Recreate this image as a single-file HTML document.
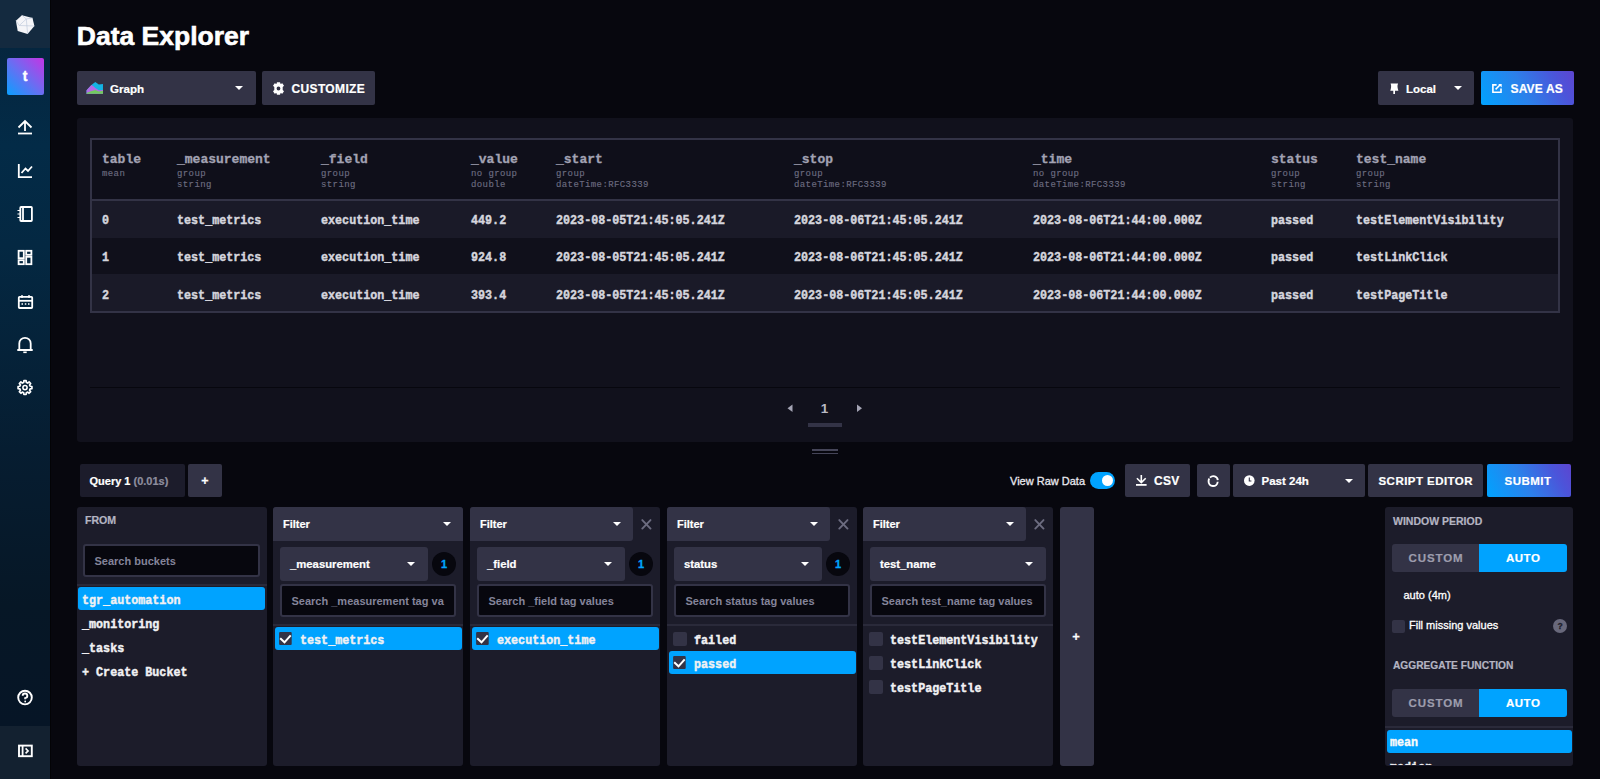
<!DOCTYPE html>
<html><head><meta charset="utf-8">
<style>
*{box-sizing:border-box;margin:0;padding:0}
html,body{width:1600px;height:779px;overflow:hidden;background:#07070e;font-family:"Liberation Sans",sans-serif;color:#fff}
.abs{position:absolute}
.mono{font-family:"Liberation Mono",monospace}
#side{left:0;top:0;width:50px;height:779px;background:linear-gradient(180deg,#05263f 48px,#032b47 145px,#042842 245px,#061d31 450px,#061726 605px,#061526 725px)}
#logo{left:0;top:0;width:50px;height:48.3px;background:#142a3f}
#avatar{left:6.5px;top:58px;width:37px;height:37px;border-radius:2px;background:linear-gradient(225deg,#c534e4 0%,#6b6df2 50%,#0aa0ff 100%);font-weight:bold;font-size:14px;text-align:center;line-height:36px;-webkit-text-stroke:0.4px #fff}
#sidebot{left:0;top:725.5px;width:50px;height:54px;background:#132130}
h1{position:absolute;left:76.8px;top:21px;font-size:26.5px;font-weight:bold;color:#fff;letter-spacing:0px;-webkit-text-stroke:0.6px #fff}
.btn{position:absolute;background:#333346;border-radius:2px;color:#fff;font-weight:bold;font-size:12px}
.panel{position:absolute;background:#11111c;border-radius:3px}
.th{position:absolute;top:151.5px;font-family:"Liberation Mono",monospace;font-weight:bold;font-size:13px;color:#a2a2b3;line-height:16px;-webkit-text-stroke:0.3px #a2a2b3}
.ts{position:absolute;top:168.5px;font-family:"Liberation Mono",monospace;font-size:9px;letter-spacing:0.4px;color:#6c6c80;line-height:11.5px;-webkit-text-stroke:0.15px #6c6c80}
.td{position:absolute;font-family:"Liberation Mono",monospace;font-weight:bold;font-size:11.72px;color:#d5d5dd;line-height:20px;white-space:nowrap;transform:scaleY(1.12);transform-origin:0 15px;-webkit-text-stroke:0.4px #d5d5dd}
.bt{position:absolute;font-weight:bold;color:#fff;line-height:16px;white-space:nowrap;-webkit-text-stroke:0.2px currentColor}
.caret{position:absolute;width:0;height:0;border-left:4.2px solid transparent;border-right:4.2px solid transparent;border-top:4.8px solid #fff}
.card{position:absolute;background:#1c1c2a;border-radius:3px}
.lbl{position:absolute;font-weight:bold;font-size:10.6px;color:#b4b4c2;line-height:14px;white-space:nowrap;-webkit-text-stroke:0.2px #b4b4c2}
.inp{position:absolute;background:#07070e;border:2px solid #333346;border-radius:3px;overflow:hidden;white-space:nowrap}
.inp span{position:absolute;left:9.5px;top:8px;font-weight:bold;font-size:11px;color:#84849a;line-height:14px}
.sel{position:absolute;background:#00a3ff;border-radius:3px}
.li{position:absolute;font-family:"Liberation Mono",monospace;font-weight:bold;font-size:11.72px;color:#f1f1f3;line-height:18px;white-space:nowrap;transform:scaleY(1.12);transform-origin:0 13px;-webkit-text-stroke:0.4px #f1f1f3}
</style></head><body>
<div id="side" class="abs"></div>
<div class="abs" style="left:50px;top:0;width:1px;height:779px;background:#030306"></div>
<div id="logo" class="abs"></div>
<svg class="abs" style="left:0;top:0" width="50" height="48" viewBox="0 0 50 48">
<polygon points="21.9,15.2 32.5,17.9 34.4,26 27.6,33.9 17.7,31 15.9,20.7" fill="#f5f5f8"/>
<polyline points="15.9,20.7 19.3,25.5 26.3,19 21.9,15.2" fill="none" stroke="#b8c4d8" stroke-width="0.6"/>
<polyline points="19.3,25.5 34.4,26" fill="none" stroke="#b8c4d8" stroke-width="0.6"/>
<polyline points="26.3,19 27.6,33.9" fill="none" stroke="#b8c4d8" stroke-width="0.6"/>
<polyline points="26.3,19 32.5,17.9" fill="none" stroke="#b8c4d8" stroke-width="0.6"/>
</svg>
<div id="avatar" class="abs">t</div>
<div id="sidebot" class="abs"></div>
<svg class="abs" style="left:0;top:100px" width="50" height="310" viewBox="0 100 50 310" fill="none" stroke="#fff" stroke-width="1.8">
<!-- upload -->
<path d="M18.5 127.5 L25 121 L31.5 127.5 M25 121.5 V131"/>
<path d="M18 133.5 H32" stroke-width="1.8"/>
<!-- chart -->
<path d="M18.8 164 V177.2 H32"/>
<path d="M21.5 173 L25.5 168.5 L28 171 L32 166.5"/>
<!-- notebook -->
<rect x="20.3" y="207" width="11.6" height="14" rx="0.8"/>
<path d="M23 207 V221"/>
<path d="M17.5 210.5 H20 M17.5 214 H20 M17.5 217.5 H20" stroke-width="1.1"/>
<!-- dashboards -->
<rect x="18.6" y="250.8" width="5.2" height="7.4"/>
<rect x="18.6" y="260.2" width="5.2" height="4"/>
<rect x="26.2" y="250.8" width="5.2" height="4"/>
<rect x="26.2" y="256.8" width="5.2" height="7.4"/>
<!-- calendar -->
<rect x="18.8" y="296.8" width="13.4" height="11.2" rx="0.8"/>
<path d="M18.8 300.8 H32.2" />
<path d="M22 295 V298 M29 295 V298" stroke-width="1.4"/>
<path d="M21.5 304 H23 M24.8 304 H26.3 M28 304 H29.5" stroke-width="1.5"/>
<!-- bell -->
<path d="M17.3 350 H32.7 M19.3 350 V343.5 A5.7 5.7 0 0 1 30.7 343.5 V350" stroke-width="1.8" stroke-linejoin="round"/>
<path d="M23.3 352.3 H26.7" stroke-width="1.6"/>
<!-- gear -->
<path stroke-width="1.7" stroke-linejoin="round" d="M23.90 380.69 L26.10 380.69 L26.32 382.47 L27.70 383.04 L29.11 381.94 L30.66 383.49 L29.56 384.90 L30.13 386.28 L31.91 386.50 L31.91 388.70 L30.13 388.92 L29.56 390.30 L30.66 391.71 L29.11 393.26 L27.70 392.16 L26.32 392.73 L26.10 394.51 L23.90 394.51 L23.68 392.73 L22.30 392.16 L20.89 393.26 L19.34 391.71 L20.44 390.30 L19.87 388.92 L18.09 388.70 L18.09 386.50 L19.87 386.28 L20.44 384.90 L19.34 383.49 L20.89 381.94 L22.30 383.04 L23.68 382.47 Z"/>
<circle cx="25" cy="387.6" r="2.1" stroke-width="1.6"/>
</svg>
<svg class="abs" style="left:0;top:680px" width="50" height="99" viewBox="0 680 50 99" fill="none" stroke="#fff" stroke-width="1.9">
<circle cx="25" cy="697.6" r="6.8"/>
<path d="M22.7 695.8 A2.3 2.3 0 1 1 25.2 698.1 V699.2" stroke-width="1.9"/>
<circle cx="25.2" cy="701.5" r="0.9" fill="#fff" stroke="none"/>
<rect x="19" y="745.6" width="12.8" height="10.6"/>
<path d="M22.6 745.6 V756.2" stroke-width="1.8"/>
<path d="M25.6 748.4 L28.1 750.9 L25.6 753.4" stroke-width="1.6"/>
</svg>
<h1>Data Explorer</h1>
<div class="btn" style="left:77px;top:71px;width:179px;height:34px"></div>
<svg class="abs" style="left:86px;top:81px" width="18" height="14" viewBox="0 0 18 14">
<path d="M0.56 9.3 L5.37 4.06 L9.31 1 L12.81 3.4 L16.97 2.97 V12.8 H0.56 Z" fill="#14b4e4"/>
<path d="M0.56 9.3 L5.37 4.06 L7.1 4.9 L9.3 7.1 L12.8 9.3 L17 9.1 V12.8 H0.56 Z" fill="#b46ae6"/>
<path d="M0.56 11.9 L5 10.3 L9.3 8.9 L12.8 10.6 L17 9.75 V12.8 H0.56 Z" fill="#72cc5e"/>
</svg>
<div class="bt" style="left:110px;top:81px;font-size:11.6px">Graph</div>
<div class="caret" style="left:235px;top:85.5px"></div>
<div class="btn" style="left:262px;top:71px;width:113px;height:34px"></div>
<svg class="abs" style="left:272px;top:82px" width="13" height="13" viewBox="0 0 13 13">
<path fill="#fff" fill-rule="evenodd" d="M5 0.3 H8 L8.6 2 L10.3 1.2 L12 3.8 L10.7 5 V8 L12 9.2 L10.3 11.8 L8.6 11 L8 12.7 H5 L4.4 11 L2.7 11.8 L1 9.2 L2.3 8 V5 L1 3.8 L2.7 1.2 L4.4 2 Z M6.5 4.6 A1.9 1.9 0 1 0 6.5 8.4 A1.9 1.9 0 1 0 6.5 4.6 Z"/>
</svg>
<div class="bt" style="left:291.5px;top:81px;font-size:12px;letter-spacing:0.35px">CUSTOMIZE</div>
<div class="btn" style="left:1378px;top:71px;width:96px;height:34px"></div>
<svg class="abs" style="left:1389px;top:83px" width="10" height="12" viewBox="0 0 10 12">
<path fill="#fff" d="M1.6 0.5 H9.1 Q8.3 2.2 8.5 4 Q8.8 6 9.4 7.7 H1.3 Q1.9 6 2.1 4 Q2.3 2.2 1.6 0.5 Z M4.3 7.5 H6 V11.1 H4.3 Z"/>
</svg>
<div class="bt" style="left:1406px;top:81px;font-size:11.5px">Local</div>
<div class="caret" style="left:1453.5px;top:86px"></div>
<div class="btn" style="left:1481px;top:71px;width:93px;height:34px;background:linear-gradient(62deg,#00a3ff 0%,#2c80ea 45%,#4b55da 80%,#5d45d0 100%)"></div>
<svg class="abs" style="left:1491px;top:83px" width="12" height="12" viewBox="0 0 12 12" fill="none" stroke="#fff" stroke-width="1.6"><path d="M5.6 1.9 H1.9 V9.2 H10 V5.6"/><path d="M4.6 6.4 L9.2 1.8" stroke-width="1.5"/><path d="M7.2 1.1 H10.7 V4.6 Z" fill="#fff" stroke="none"/></svg>
<div class="bt" style="left:1510.5px;top:81px;font-size:12px;letter-spacing:0.15px">SAVE AS</div>
<div class="panel" style="left:77px;top:118px;width:1496px;height:324px"></div>
<div class="abs" style="left:90px;top:138px;width:1470px;height:175px;border:2px solid #333346;background:#0f0f1a"></div>
<div class="abs" style="left:92px;top:199px;width:1466px;height:2px;background:#333346"></div>
<div class="abs" style="left:92px;top:201px;width:1466px;height:37px;background:#1a1a28"></div>
<div class="abs" style="left:92px;top:238px;width:1466px;height:36px;background:#10101b"></div>
<div class="abs" style="left:92px;top:274px;width:1466px;height:37px;background:#1a1a28"></div>
<div class="th" style="left:102px">table</div>
<div class="ts" style="left:102px">mean</div>
<div class="th" style="left:177px">_measurement</div>
<div class="ts" style="left:177px">group<br>string</div>
<div class="th" style="left:321px">_field</div>
<div class="ts" style="left:321px">group<br>string</div>
<div class="th" style="left:471px">_value</div>
<div class="ts" style="left:471px">no group<br>double</div>
<div class="th" style="left:556px">_start</div>
<div class="ts" style="left:556px">group<br>dateTime:RFC3339</div>
<div class="th" style="left:794px">_stop</div>
<div class="ts" style="left:794px">group<br>dateTime:RFC3339</div>
<div class="th" style="left:1033px">_time</div>
<div class="ts" style="left:1033px">no group<br>dateTime:RFC3339</div>
<div class="th" style="left:1271px">status</div>
<div class="ts" style="left:1271px">group<br>string</div>
<div class="th" style="left:1356px">test_name</div>
<div class="ts" style="left:1356px">group<br>string</div>
<div class="td" style="left:102px;top:211px">0</div>
<div class="td" style="left:177px;top:211px">test_metrics</div>
<div class="td" style="left:321px;top:211px">execution_time</div>
<div class="td" style="left:471px;top:211px">449.2</div>
<div class="td" style="left:556px;top:211px">2023-08-05T21:45:05.241Z</div>
<div class="td" style="left:794px;top:211px">2023-08-06T21:45:05.241Z</div>
<div class="td" style="left:1033px;top:211px">2023-08-06T21:44:00.000Z</div>
<div class="td" style="left:1271px;top:211px">passed</div>
<div class="td" style="left:1356px;top:211px">testElementVisibility</div>
<div class="td" style="left:102px;top:248px">1</div>
<div class="td" style="left:177px;top:248px">test_metrics</div>
<div class="td" style="left:321px;top:248px">execution_time</div>
<div class="td" style="left:471px;top:248px">924.8</div>
<div class="td" style="left:556px;top:248px">2023-08-05T21:45:05.241Z</div>
<div class="td" style="left:794px;top:248px">2023-08-06T21:45:05.241Z</div>
<div class="td" style="left:1033px;top:248px">2023-08-06T21:44:00.000Z</div>
<div class="td" style="left:1271px;top:248px">passed</div>
<div class="td" style="left:1356px;top:248px">testLinkClick</div>
<div class="td" style="left:102px;top:286px">2</div>
<div class="td" style="left:177px;top:286px">test_metrics</div>
<div class="td" style="left:321px;top:286px">execution_time</div>
<div class="td" style="left:471px;top:286px">393.4</div>
<div class="td" style="left:556px;top:286px">2023-08-05T21:45:05.241Z</div>
<div class="td" style="left:794px;top:286px">2023-08-06T21:45:05.241Z</div>
<div class="td" style="left:1033px;top:286px">2023-08-06T21:44:00.000Z</div>
<div class="td" style="left:1271px;top:286px">passed</div>
<div class="td" style="left:1356px;top:286px">testPageTitle</div>
<div class="abs" style="left:90px;top:387px;width:1470px;height:1px;background:#07070e"></div>
<svg class="abs" style="left:785px;top:400px" width="80" height="20"><polygon points="7.5,4.5 7.5,12 2.5,8.25" fill="#a4a4b4"/><polygon points="72,4.5 72,12 77,8.25" fill="#a4a4b4"/></svg>
<div class="abs" style="left:814.5px;top:400.5px;width:20px;text-align:center;font-size:13.5px;font-weight:bold;color:#b9b9c5">1</div>
<div class="abs" style="left:808px;top:423px;width:34px;height:4px;background:#333346"></div>
<div class="abs" style="left:812px;top:449px;width:26px;height:1.5px;background:#454558"></div>
<div class="abs" style="left:812px;top:452.5px;width:26px;height:1.5px;background:#454558"></div>
<div class="abs" style="left:80px;top:464px;width:105px;height:33px;background:#1c1c2b;border-radius:2px"></div>
<div class="bt" style="left:89.5px;top:473px;font-size:11px">Query 1 <span style="color:#8e8e9e">(0.01s)</span></div>
<div class="btn" style="left:188px;top:464px;width:34px;height:33px"></div>
<div class="bt" style="left:198px;top:473px;font-size:12.5px;width:14px;text-align:center">+</div>
<div class="abs" style="left:1010px;top:473px;font-size:11px;color:#e8e8ee;line-height:16px;-webkit-text-stroke:0.3px #e8e8ee">View Raw Data</div>
<div class="abs" style="left:1090px;top:472px;width:25px;height:16.5px;border-radius:9px;background:#00a3ff"></div>
<div class="abs" style="left:1102px;top:475px;width:11px;height:11px;border-radius:50%;background:#fff"></div>
<div class="btn" style="left:1125px;top:464px;width:65px;height:33px"></div>
<svg class="abs" style="left:1135px;top:474px" width="13" height="13" viewBox="0 0 13 13" fill="none" stroke="#fff" stroke-width="1.6"><path d="M6.3 1 V8.2 M1.9 4.3 L6.3 8.6 L10.7 4.3"/><path d="M1 10.9 H11.6" stroke-width="1.8"/></svg>
<div class="bt" style="left:1154px;top:473px;font-size:12px;letter-spacing:0.3px">CSV</div>
<div class="btn" style="left:1196.5px;top:464px;width:33px;height:33px"></div>
<svg class="abs" style="left:1206px;top:474px" width="14" height="14" viewBox="0 0 14 14" fill="none" stroke="#fff" stroke-width="1.9"><path d="M4 3.6 A4.5 4.5 0 0 1 11.8 6.2"/><path d="M11.7 7.8 A4.5 4.5 0 0 1 2.6 7.2 A4.5 4.5 0 0 1 3.3 4.4"/></svg>
<div class="btn" style="left:1233px;top:464px;width:132px;height:33px"></div>
<svg class="abs" style="left:1243px;top:474px" width="13" height="13" viewBox="0 0 13 13"><circle cx="6.3" cy="6.6" r="5.3" fill="#fff"/><path d="M6.3 3.6 V7 H8.4" fill="none" stroke="#333346" stroke-width="1.1"/></svg>
<div class="bt" style="left:1261.5px;top:473px;font-size:11.5px">Past 24h</div>
<div class="caret" style="left:1344.5px;top:478.5px"></div>
<div class="btn" style="left:1368px;top:464px;width:115px;height:33px"></div>
<div class="bt" style="left:1378.5px;top:473px;font-size:11.5px;letter-spacing:0.45px">SCRIPT EDITOR</div>
<div class="btn" style="left:1486.5px;top:464px;width:84px;height:33px;background:linear-gradient(62deg,#00a3ff 0%,#2c80ea 45%,#4b55da 80%,#5d45d0 100%)"></div>
<div class="bt" style="left:1504.5px;top:473px;font-size:11.5px;letter-spacing:0.5px">SUBMIT</div>
<div class="card" style="left:77px;top:507px;width:190px;height:259px"></div>
<div class="lbl" style="left:85px;top:513px">FROM</div>
<div class="inp" style="left:83px;top:544px;width:177px;height:33px"><span>Search buckets</span></div>
<div class="abs" style="left:77px;top:584px;width:190px;height:2px;background:#2a2a3a"></div>
<div class="sel" style="left:78px;top:587px;width:187px;height:23px"></div>
<div class="li" style="left:82px;top:592px">tgr_automation</div>
<div class="li" style="left:82px;top:616px">_monitoring</div>
<div class="li" style="left:82px;top:640px">_tasks</div>
<div class="li" style="left:82px;top:664px">+ Create Bucket</div>
<div class="card" style="left:273px;top:507px;width:190px;height:259px"></div>
<div class="abs" style="left:273px;top:507px;width:190px;height:34px;background:#333346;border-radius:3px 3px 0 0"></div>
<div class="bt" style="left:283px;top:516px;font-size:11px">Filter</div>
<div class="caret" style="left:443px;top:522px"></div>
<div class="abs" style="left:280px;top:547px;width:148px;height:34px;background:#333346;border-radius:3px"></div>
<div class="bt" style="left:290px;top:556px;font-size:11.3px">_measurement</div>
<div class="caret" style="left:407px;top:561.5px"></div>
<div class="abs" style="left:432px;top:552px;width:24px;height:24px;border-radius:50%;background:#07070e;color:#00a3ff;font-weight:bold;font-size:11px;text-align:center;line-height:24px;-webkit-text-stroke:0.3px #00a3ff">1</div>
<div class="inp" style="left:280px;top:584px;width:176px;height:33px"><span>Search _measurement tag va</span></div>
<div class="abs" style="left:273px;top:624px;width:190px;height:2px;background:#2a2a3a"></div>
<div class="sel" style="left:274.5px;top:627px;width:187px;height:23px"></div>
<svg class="abs" style="left:278.5px;top:632px" width="14" height="14" viewBox="0 0 14 14"><rect x="0.1" y="0.1" width="12.6" height="12.8" rx="1" fill="#333346"/><path d="M1.2 6.3 L5.5 10.3 L11.7 3.3" fill="none" stroke="#fff" stroke-width="2"/></svg>
<div class="li" style="left:300px;top:632px">test_metrics</div>
<div class="card" style="left:470px;top:507px;width:190px;height:259px"></div>
<div class="abs" style="left:470px;top:507px;width:163px;height:34px;background:#333346;border-radius:3px 3px 3px 0"></div>
<div class="bt" style="left:480px;top:516px;font-size:11px">Filter</div>
<div class="caret" style="left:613px;top:522px"></div>
<svg class="abs" style="left:641px;top:519px" width="11" height="11" viewBox="0 0 11 11" stroke="#6c6c80" stroke-width="1.9" stroke-linecap="round"><path d="M1.3 1.1 L9.5 9.6 M9.5 1.1 L1.3 9.6"/></svg>
<div class="abs" style="left:477px;top:547px;width:148px;height:34px;background:#333346;border-radius:3px"></div>
<div class="bt" style="left:487px;top:556px;font-size:11.3px">_field</div>
<div class="caret" style="left:604px;top:561.5px"></div>
<div class="abs" style="left:629px;top:552px;width:24px;height:24px;border-radius:50%;background:#07070e;color:#00a3ff;font-weight:bold;font-size:11px;text-align:center;line-height:24px;-webkit-text-stroke:0.3px #00a3ff">1</div>
<div class="inp" style="left:477px;top:584px;width:176px;height:33px"><span>Search _field tag values</span></div>
<div class="abs" style="left:470px;top:624px;width:190px;height:2px;background:#2a2a3a"></div>
<div class="sel" style="left:471.5px;top:627px;width:187px;height:23px"></div>
<svg class="abs" style="left:475.5px;top:632px" width="14" height="14" viewBox="0 0 14 14"><rect x="0.1" y="0.1" width="12.6" height="12.8" rx="1" fill="#333346"/><path d="M1.2 6.3 L5.5 10.3 L11.7 3.3" fill="none" stroke="#fff" stroke-width="2"/></svg>
<div class="li" style="left:497px;top:632px">execution_time</div>
<div class="card" style="left:667px;top:507px;width:190px;height:259px"></div>
<div class="abs" style="left:667px;top:507px;width:163px;height:34px;background:#333346;border-radius:3px 3px 3px 0"></div>
<div class="bt" style="left:677px;top:516px;font-size:11px">Filter</div>
<div class="caret" style="left:810px;top:522px"></div>
<svg class="abs" style="left:838px;top:519px" width="11" height="11" viewBox="0 0 11 11" stroke="#6c6c80" stroke-width="1.9" stroke-linecap="round"><path d="M1.3 1.1 L9.5 9.6 M9.5 1.1 L1.3 9.6"/></svg>
<div class="abs" style="left:674px;top:547px;width:148px;height:34px;background:#333346;border-radius:3px"></div>
<div class="bt" style="left:684px;top:556px;font-size:11.3px">status</div>
<div class="caret" style="left:801px;top:561.5px"></div>
<div class="abs" style="left:826px;top:552px;width:24px;height:24px;border-radius:50%;background:#07070e;color:#00a3ff;font-weight:bold;font-size:11px;text-align:center;line-height:24px;-webkit-text-stroke:0.3px #00a3ff">1</div>
<div class="inp" style="left:674px;top:584px;width:176px;height:33px"><span>Search status tag values</span></div>
<div class="abs" style="left:667px;top:624px;width:190px;height:2px;background:#2a2a3a"></div>
<div class="abs" style="left:672.5px;top:632px;width:14px;height:14px;border-radius:2px;background:#333346"></div>
<div class="li" style="left:694px;top:632px">failed</div>
<div class="sel" style="left:668.5px;top:651px;width:187px;height:23px"></div>
<svg class="abs" style="left:672.5px;top:656px" width="14" height="14" viewBox="0 0 14 14"><rect x="0.1" y="0.1" width="12.6" height="12.8" rx="1" fill="#333346"/><path d="M1.2 6.3 L5.5 10.3 L11.7 3.3" fill="none" stroke="#fff" stroke-width="2"/></svg>
<div class="li" style="left:694px;top:656px">passed</div>
<div class="card" style="left:863px;top:507px;width:190px;height:259px"></div>
<div class="abs" style="left:863px;top:507px;width:163px;height:34px;background:#333346;border-radius:3px 3px 3px 0"></div>
<div class="bt" style="left:873px;top:516px;font-size:11px">Filter</div>
<div class="caret" style="left:1006px;top:522px"></div>
<svg class="abs" style="left:1034px;top:519px" width="11" height="11" viewBox="0 0 11 11" stroke="#6c6c80" stroke-width="1.9" stroke-linecap="round"><path d="M1.3 1.1 L9.5 9.6 M9.5 1.1 L1.3 9.6"/></svg>
<div class="abs" style="left:870px;top:547px;width:176px;height:34px;background:#333346;border-radius:3px"></div>
<div class="bt" style="left:880px;top:556px;font-size:11.3px">test_name</div>
<div class="caret" style="left:1025px;top:561.5px"></div>
<div class="inp" style="left:870px;top:584px;width:176px;height:33px"><span>Search test_name tag values</span></div>
<div class="abs" style="left:863px;top:624px;width:190px;height:2px;background:#2a2a3a"></div>
<div class="abs" style="left:868.5px;top:632px;width:14px;height:14px;border-radius:2px;background:#333346"></div>
<div class="li" style="left:890px;top:632px">testElementVisibility</div>
<div class="abs" style="left:868.5px;top:656px;width:14px;height:14px;border-radius:2px;background:#333346"></div>
<div class="li" style="left:890px;top:656px">testLinkClick</div>
<div class="abs" style="left:868.5px;top:680px;width:14px;height:14px;border-radius:2px;background:#333346"></div>
<div class="li" style="left:890px;top:680px">testPageTitle</div>
<div class="abs" style="left:1060px;top:507px;width:34px;height:259px;background:#333346;border-radius:3px"></div>
<div class="bt" style="left:1069px;top:628.5px;font-size:13px;width:14px;text-align:center">+</div>
<div class="card" style="left:1385px;top:507px;width:188px;height:259px"></div>
<div class="lbl" style="left:1393px;top:513.5px;font-size:10.5px">WINDOW PERIOD</div>
<div class="abs" style="left:1391.5px;top:544px;width:87px;height:28px;background:#333346;border-radius:3px 0 0 3px"></div>
<div class="abs" style="left:1478.5px;top:544px;width:88px;height:28px;background:#00a3ff;border-radius:0 3px 3px 0"></div>
<div class="bt" style="left:1408.5px;top:549.5px;font-size:11.5px;letter-spacing:0.9px;color:#9d9dad">CUSTOM</div>
<div class="bt" style="left:1506px;top:549.5px;font-size:11.5px;letter-spacing:0.5px">AUTO</div>
<div class="abs" style="left:1391.5px;top:689px;width:87px;height:28px;background:#333346;border-radius:3px 0 0 3px"></div>
<div class="abs" style="left:1478.5px;top:689px;width:88px;height:28px;background:#00a3ff;border-radius:0 3px 3px 0"></div>
<div class="bt" style="left:1408.5px;top:694.5px;font-size:11.5px;letter-spacing:0.9px;color:#9d9dad">CUSTOM</div>
<div class="bt" style="left:1506px;top:694.5px;font-size:11.5px;letter-spacing:0.5px">AUTO</div>
<div class="abs" style="left:1403.5px;top:588px;font-size:11px;color:#fff;line-height:14px;-webkit-text-stroke:0.3px #fff">auto (4m)</div>
<div class="abs" style="left:1391.5px;top:619.5px;width:13px;height:13px;border-radius:2px;background:#333346"></div>
<div class="abs" style="left:1409px;top:618px;font-size:11px;color:#fff;line-height:14px;-webkit-text-stroke:0.3px #fff">Fill missing values</div>
<div class="abs" style="left:1553px;top:619px;width:14px;height:14px;border-radius:50%;background:#68687b;color:#1c1c2a;font-weight:bold;font-size:8.5px;text-align:center;line-height:14px;-webkit-text-stroke:0.3px #1c1c2a">?</div>
<div class="lbl" style="left:1393px;top:658.5px;font-size:10.2px">AGGREGATE FUNCTION</div>
<div class="abs" style="left:1385px;top:726px;width:188px;height:2px;background:#2a2a3a"></div>
<div class="sel" style="left:1386.5px;top:730px;width:185.5px;height:23px"></div>
<div class="abs" style="left:1385px;top:730px;width:188px;height:35px;overflow:hidden"><div class="li" style="left:5px;top:4px;color:#fff">mean</div><div class="li" style="left:5px;top:29px">median</div></div>
</body></html>
